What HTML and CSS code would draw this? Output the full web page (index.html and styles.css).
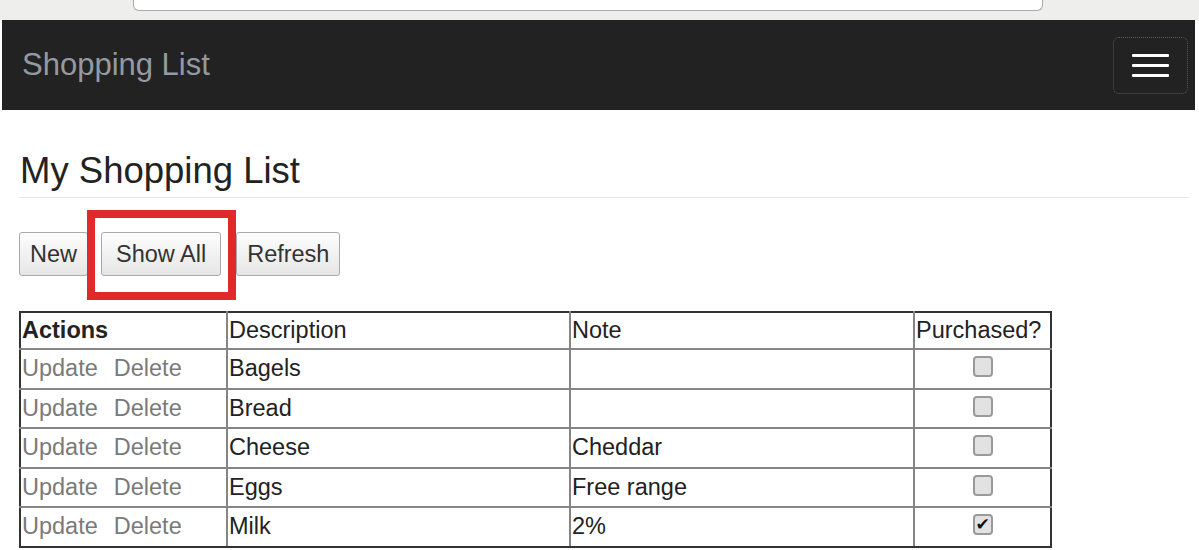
FILE: index.html
```html
<!DOCTYPE html>
<html>
<head>
<meta charset="utf-8">
<title>Shopping List</title>
<link rel="stylesheet" href="styles.css">
</head>
<body>
<div class="chrome"><div class="addr"></div></div>
<nav class="navbar">
  <span class="brand">Shopping List</span>
  <button class="toggle" aria-label="menu">
    <span class="bar"></span><span class="bar"></span><span class="bar"></span>
  </button>
</nav>
<main class="container">
  <h1 class="page-header">My Shopping List</h1>
  <div class="toolbar">
    <button class="btn">New</button>
    <button class="btn btn-wide">Show All</button>
    <button class="btn btn-last">Refresh</button>
    <div class="highlight"></div>
  </div>
  <table class="list">
    <colgroup>
      <col class="c-actions"><col class="c-desc"><col class="c-note"><col class="c-purch">
    </colgroup>
    <thead>
      <tr><th class="bold">Actions</th><th>Description</th><th>Note</th><th>Purchased?</th></tr>
    </thead>
    <tbody>
      <tr><td><a class="act">Update</a><a class="act">Delete</a></td><td>Bagels</td><td></td><td class="center"><span class="cb"></span></td></tr>
      <tr><td><a class="act">Update</a><a class="act">Delete</a></td><td>Bread</td><td></td><td class="center"><span class="cb"></span></td></tr>
      <tr><td><a class="act">Update</a><a class="act">Delete</a></td><td>Cheese</td><td>Cheddar</td><td class="center"><span class="cb"></span></td></tr>
      <tr><td><a class="act">Update</a><a class="act">Delete</a></td><td>Eggs</td><td>Free range</td><td class="center"><span class="cb"></span></td></tr>
      <tr><td><a class="act">Update</a><a class="act">Delete</a></td><td>Milk</td><td>2%</td><td class="center"><span class="cb checked">&#10004;</span></td></tr>
    </tbody>
  </table>
</main>
</body>
</html>
```
FILE: styles.css
```css
* { box-sizing: border-box; }
html, body { margin: 0; padding: 0; background: #fff; }
body { font-family: "Liberation Sans", Arial, sans-serif; color: #222; width: 1199px; height: 550px; overflow: hidden; }

.chrome { height: 20px; background: #eeeeec; padding-left: 133px; }
.addr { width: 910px; height: 11px; background: #fff; border: 1px solid #aaa; border-top: none; border-radius: 0 0 6px 6px; }

.navbar { height: 90px; margin: 0 4px 0 2px; background: #222; display: flex; align-items: center; justify-content: space-between; padding: 0 7px 0 20px; }
.brand { font-size: 31px; color: #939aa2; }
.toggle { width: 75px; height: 57px; background: transparent; border: 1px dotted #5a5a5a; border-radius: 6px; display: flex; flex-direction: column; align-items: center; justify-content: center; gap: 7px; padding: 0; }
.bar { display: block; width: 37px; height: 3px; background: #fff; border-radius: 1px; }

.container { padding: 0 10px 0 19px; }
.page-header { font-weight: normal; font-size: 36.5px; line-height: 38px; margin: 42px 0 0 0; padding: 0 0 7px 1px; border-bottom: 1px solid #e4e4e4; color: #222; }

.toolbar { position: relative; display: flex; gap: 13px; margin-top: 34px; height: 44px; }
.btn { font-family: "Liberation Sans", Arial, sans-serif; font-size: 23.5px; color: #333; height: 44px; padding: 0 10px; border: 1px solid #a9a9a9; border-radius: 3px; background: linear-gradient(#fdfdfd, #e6e6e6); }
.btn-wide { padding: 0 14px; }
.btn-last { margin-left: 2px; }
.highlight { position: absolute; left: 68px; top: -22px; width: 149px; height: 90px; border: 8px solid #e02a2a; pointer-events: none; }

.list { margin-top: 35px; border-collapse: collapse; border: 2px solid #333; width: 1031px; table-layout: fixed; font-size: 23.5px; }
.c-actions { width: 207px; }
.c-desc { width: 343px; }
.c-note { width: 344px; }
.c-purch { width: 137px; }
.list th, .list td { border: 2px solid #858585; padding: 2px 1px; text-align: left; font-weight: normal; line-height: 33.5px; color: #222; white-space: nowrap; }
.list thead th { border-top-color: #333; line-height: 31px; }
.list th:first-child, .list td:first-child { border-left-color: #333; }
.list th:last-child, .list td:last-child { border-right-color: #333; }
.list tbody tr:last-child td { border-bottom-color: #333; }
.list th.bold { font-weight: bold; }
.act { color: #7a7a7a; margin-right: 16px; }
.center { text-align: center !important; }
.cb { display: inline-block; width: 20px; height: 21px; border: 2px solid #9a9a9a; border-radius: 4px; background: #e2e2e2; vertical-align: middle; font-size: 17px; font-weight: bold; line-height: 17px; color: #111; text-align: center; margin-top: -6px; font-family: "DejaVu Sans", sans-serif; }
```
